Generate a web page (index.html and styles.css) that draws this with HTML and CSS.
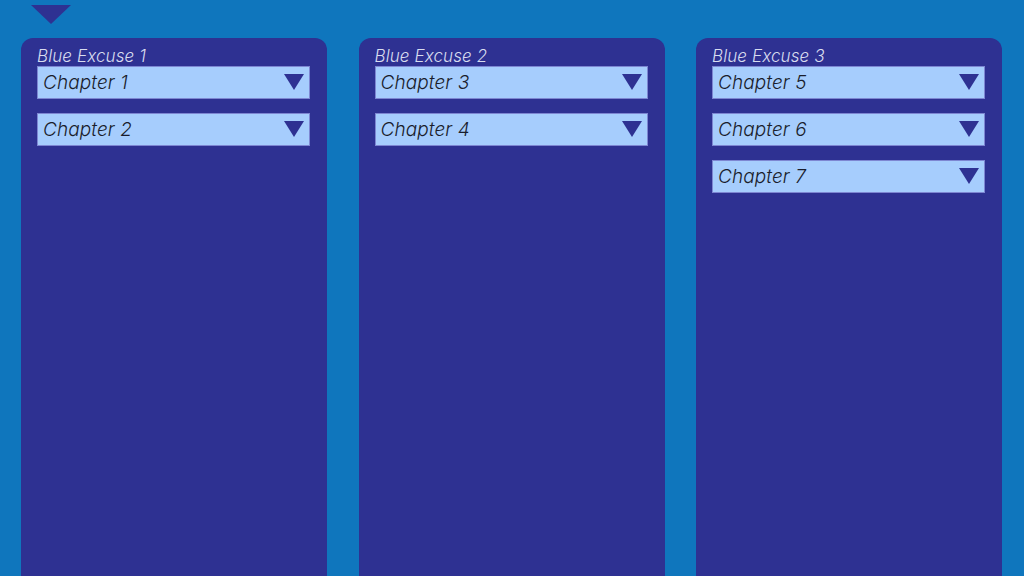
FILE: index.html
```html
<!DOCTYPE html>
<html>
<head>
<meta charset="utf-8">
<link rel="stylesheet" href="styles.css">
</head>
<body>
<div class="top">
  <svg class="toggle" width="40" height="19" viewBox="0 0 40 19"><polygon points="0,0 40,0 20,19" fill="#2e3192"/></svg>
</div>
<div class="columns">
  <section class="panel">
    <div class="title">Blue Excuse 1</div>
    <div class="list">
      <div class="dd"><span>Chapter 1</span><svg width="20" height="16" viewBox="0 0 20 16"><polygon points="0,0 20,0 10,16" fill="#2e3192"/></svg></div>
      <div class="dd"><span>Chapter 2</span><svg width="20" height="16" viewBox="0 0 20 16"><polygon points="0,0 20,0 10,16" fill="#2e3192"/></svg></div>
    </div>
  </section>
  <section class="panel">
    <div class="title">Blue Excuse 2</div>
    <div class="list">
      <div class="dd"><span>Chapter 3</span><svg width="20" height="16" viewBox="0 0 20 16"><polygon points="0,0 20,0 10,16" fill="#2e3192"/></svg></div>
      <div class="dd"><span>Chapter 4</span><svg width="20" height="16" viewBox="0 0 20 16"><polygon points="0,0 20,0 10,16" fill="#2e3192"/></svg></div>
    </div>
  </section>
  <section class="panel">
    <div class="title">Blue Excuse 3</div>
    <div class="list">
      <div class="dd"><span>Chapter 5</span><svg width="20" height="16" viewBox="0 0 20 16"><polygon points="0,0 20,0 10,16" fill="#2e3192"/></svg></div>
      <div class="dd"><span>Chapter 6</span><svg width="20" height="16" viewBox="0 0 20 16"><polygon points="0,0 20,0 10,16" fill="#2e3192"/></svg></div>
      <div class="dd"><span>Chapter 7</span><svg width="20" height="16" viewBox="0 0 20 16"><polygon points="0,0 20,0 10,16" fill="#2e3192"/></svg></div>
    </div>
  </section>
</div>
</body>
</html>
```
FILE: styles.css
```css
html, body {
  margin: 0;
  height: 100%;
  overflow: hidden;
}
body {
  background: #0f76bd;
  font-family: Inter, "Noto Sans", sans-serif;
}
.top {
  height: 38px;
  padding-left: 31px;
  box-sizing: border-box;
  padding-top: 5px;
}
.toggle {
  display: block;
}
.columns {
  display: grid;
  grid-template-columns: 306px 306px 306px;
  column-gap: 31.5px;
  padding-left: 21px;
  height: 560px;
}
.panel {
  background: #2e3192;
  border-radius: 12px 12px 0 0;
  padding: 8px 17px 0 16px;
}
.title {
  font-size: 17px;
  line-height: 20px;
  font-style: italic;
  font-weight: 300;
  color: #d8dcef;
  letter-spacing: 0.1px;
}
.list {
  display: flex;
  flex-direction: column;
  gap: 14px;
}
.dd {
  height: 33px;
  box-sizing: border-box;
  background: #a6cdfd;
  border: 1px solid #7d86d2;
  display: flex;
  align-items: center;
  justify-content: space-between;
  padding: 0 5px 0 5px;
}
.dd span {
  font-size: 19px;
  font-style: italic;
  font-weight: 300;
  color: #1a1d2c;
  letter-spacing: 0.1px;
}
.dd svg {
  display: block;
  margin-top: -1px;
}
```
